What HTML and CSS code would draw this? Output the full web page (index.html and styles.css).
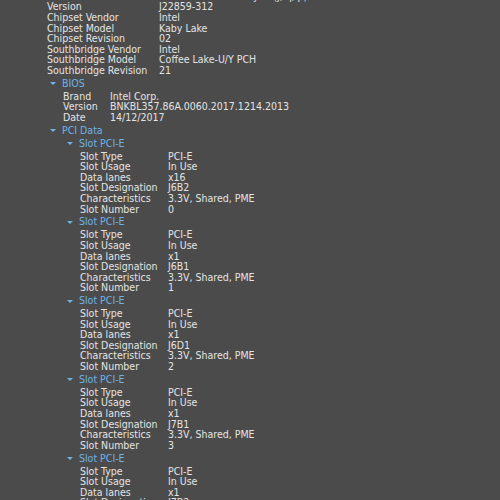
FILE: index.html
```html
<!DOCTYPE html>
<html lang="en">
<head>
  <meta charset="UTF-8" />
  <title>System Info</title>
  <link rel="stylesheet" href="styles.css">
</head>
<body>
  <div class="tree">
    <div class="props top">
      <span class="k"></span><span class="v">NUC8BEB Bean Canyon (j, q, p)</span>
      <span class="k">Version</span><span class="v">J22859-312</span>
      <span class="k">Chipset Vendor</span><span class="v">Intel</span>
      <span class="k">Chipset Model</span><span class="v">Kaby Lake</span>
      <span class="k">Chipset Revision</span><span class="v">02</span>
      <span class="k">Southbridge Vendor</span><span class="v">Intel</span>
      <span class="k">Southbridge Model</span><span class="v">Coffee Lake-U/Y PCH</span>
      <span class="k">Southbridge Revision</span><span class="v">21</span>
    </div>

    <div class="node">
      <div class="head"><span class="arrow"></span>BIOS</div>
      <div class="props bios">
        <span class="k">Brand</span><span class="v">Intel Corp.</span>
        <span class="k">Version</span><span class="v">BNKBL357.86A.0060.2017.1214.2013</span>
        <span class="k">Date</span><span class="v">14/12/2017</span>
      </div>
    </div>

    <div class="node">
      <div class="head"><span class="arrow"></span>PCI Data</div>
      <div id="slots" class="sub"></div>
    </div>
  </div>

  <script>
    const slots = [
      { lanes: "x16", des: "J6B2", num: 0 },
      { lanes: "x1", des: "J6B1", num: 1 },
      { lanes: "x1", des: "J6D1", num: 2 },
      { lanes: "x1", des: "J7B1", num: 3 },
      { lanes: "x1", des: "J7B2", num: 4 }
    ];

    const box = document.getElementById('slots');
    box.innerHTML = slots.map(s => `
      <div class="node">
        <div class="head"><span class="arrow"></span>Slot PCI-E</div>
        <div class="props slot">
          <span class="k">Slot Type</span><span class="v">PCI-E</span>
          <span class="k">Slot Usage</span><span class="v">In Use</span>
          <span class="k">Data lanes</span><span class="v">${s.lanes}</span>
          <span class="k">Slot Designation</span><span class="v">${s.des}</span>
          <span class="k">Characteristics</span><span class="v">3.3V, Shared, PME</span>
          <span class="k">Slot Number</span><span class="v">${s.num}</span>
        </div>
      </div>
    `).join('');
  </script>
</body>
</html>
```

FILE: styles.css
```css
html, body { height: 100%; }
body {
  margin: 0;
  background: #4b4b4b;
  color: #e4e4e4;
  font-family: "DejaVu Sans Condensed", "DejaVu Sans", sans-serif;
  font-size: 10.5px;
  overflow: hidden;
}
.tree { padding-left: 47px; padding-top: 0.1px; margin-top: -9.3px; }
.props { display: grid; line-height: 10.6px; white-space: nowrap; }
.props.top { grid-template-columns: 112px auto; }
.props.bios { grid-template-columns: 47px auto; padding-left: 16px; }
.props.slot { grid-template-columns: 88px auto; padding-left: 16px; }
.sub { padding-left: 17px; }
.head {
  color: #6fb2e6;
  line-height: 10.6px;
  margin: 2.3px 0 2.3px 1px;
  display: flex;
  align-items: center;
}
.arrow {
  width: 0; height: 0;
  border-left: 3px solid transparent;
  border-right: 3px solid transparent;
  border-top: 3px solid #6fb2e6;
  margin: 1px 6px 0 2px;
}
```
